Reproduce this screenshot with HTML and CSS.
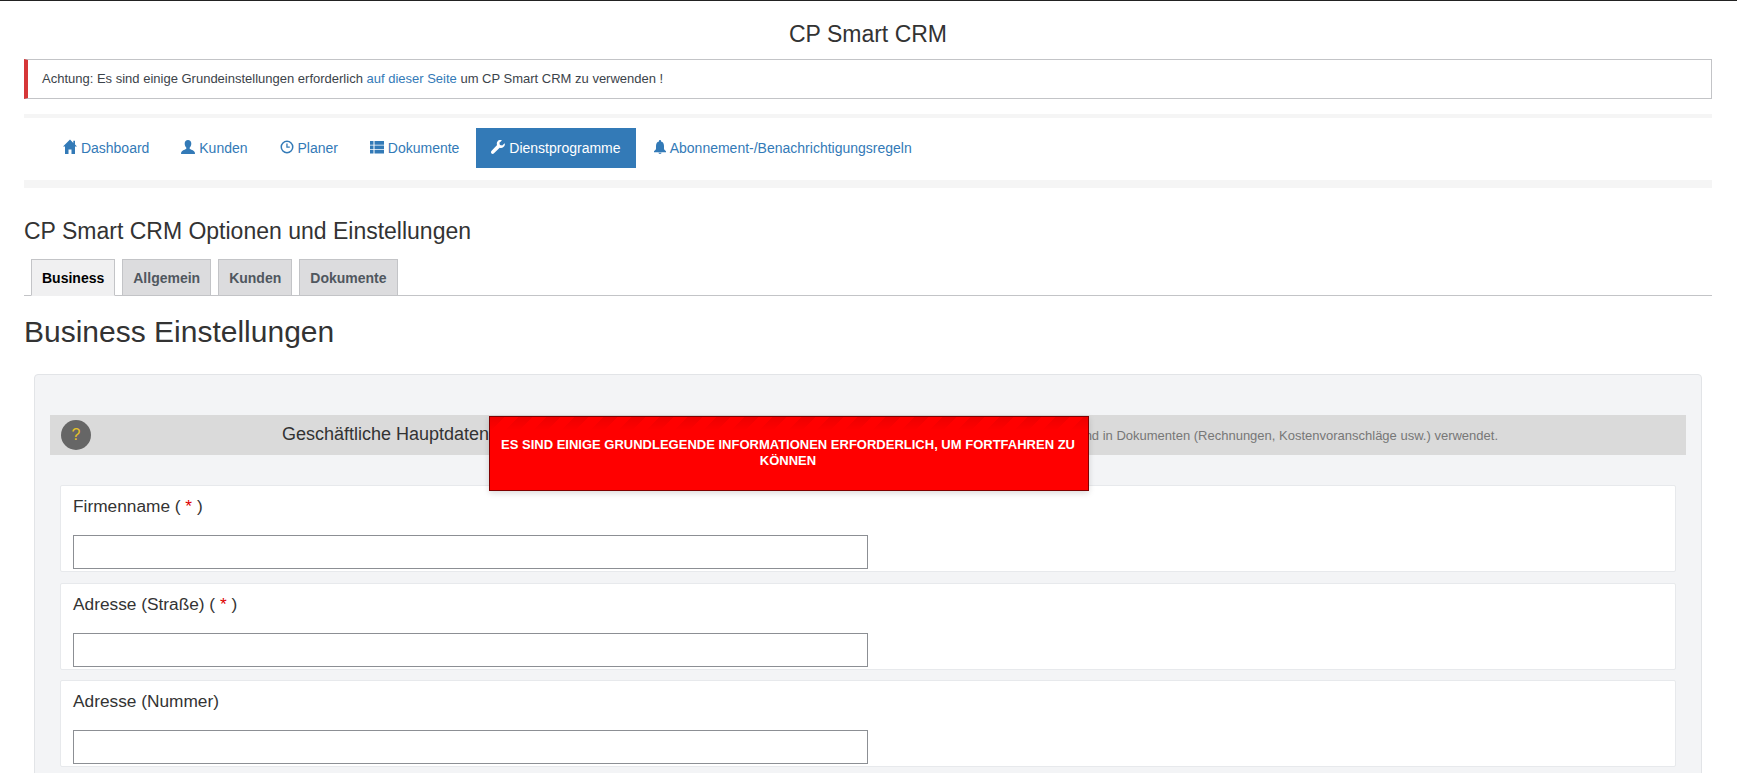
FILE: index.html
```html
<!DOCTYPE html>
<html lang="de">
<head>
<meta charset="utf-8">
<title>CP Smart CRM</title>
<link rel="stylesheet" href="styles.css">
</head>
<body>
<div class="page">
  <h3 class="app-title">CP Smart CRM</h3>
  <div class="notice">Achtung: Es sind einige Grundeinstellungen erforderlich <a href="#">auf dieser Seite</a> um CP Smart CRM zu verwenden !</div>
  <nav class="navbar">
    <ul class="pills">
      <li><a href="#"><svg class="ico" viewBox="0 0 14 14"><path d="M7 -.6 0 6.600h2V14h3.500V9.400h3V14H12V6.600h2l-2-2V.8H10.300v2.100z"/></svg> Dashboard</a></li>
      <li><a href="#"><svg class="ico" viewBox="0 0 14 14"><path d="M7 0C5 0 3.700 1.400 3.700 3.400c0 1.600.6 3.100 1.500 4 .4.500.2 1.200-.3 1.500C3.400 9.800.8 10.400.2 12.300L0 14h14l-.2-1.700c-.6-1.900-3.200-2.500-4.700-3.400-.5-.3-.7-1-.3-1.500.9-.9 1.500-2.400 1.500-4C10.300 1.400 9 0 7 0z"/></svg> Kunden</a></li>
      <li><a href="#"><svg class="ico" viewBox="0 0 14 14"><path fill-rule="evenodd" d="M7 .5a6.500 6.500 0 1 0 0 13 6.500 6.500 0 0 0 0-13zm0 1.500a5 5 0 1 1 0 10 5 5 0 0 1 0-10zM6.300 3.500v4.200h3.500V6.500H7.600v-3z"/></svg> Planer</a></li>
      <li><a href="#"><svg class="ico" viewBox="0 0 14 14"><path d="M0 1h3.500v3.700H0zM4.500 1H14v3.700H4.500zM0 5.400h3.500v3.700H0zM4.500 5.400H14v3.700H4.500zM0 9.800h3.500v3.700H0zM4.500 9.800H14v3.700H4.500z"/></svg> Dokumente</a></li>
      <li class="active"><a href="#"><svg class="ico" viewBox="0 0 14 14"><path d="M13.700 3.200 11.200 5.500 8.900 5 8.400 2.800 10.900.4C9.300-.3 7.400.1 6.500 1.400 5.700 2.500 5.600 3.900 6.100 5L.6 10.800c-.8.800-.8 1.900-.1 2.600.7.700 1.800.6 2.500-.1L8.700 7.700c1.200.5 2.600.3 3.700-.6 1.300-1 1.800-2.600 1.300-3.900z"/></svg> Dienstprogramme</a></li>
      <li><a href="#"><svg class="ico" viewBox="0 0 14 14"><path d="M7 0c-.6 0-1 .4-1 1v.5C3.900 2 3 3.800 3 6v2.600c0 1-.9 1.900-2 2.600v1h12v-1c-1.100-.7-2-1.600-2-2.600V6c0-2.200-.9-4-3-4.500V1c0-.6-.4-1-1-1zM5.400 12.800c.2.700.8 1.200 1.600 1.200s1.400-.5 1.600-1.200z"/></svg> Abonnement-/Benachrichtigungsregeln</a></li>
    </ul>
  </nav>
  <h3 class="page-title">CP Smart CRM Optionen und Einstellungen</h3>
  <div class="tabs">
    <a class="tab tab-active" href="#">Business</a>
    <a class="tab" href="#">Allgemein</a>
    <a class="tab" href="#">Kunden</a>
    <a class="tab" href="#">Dokumente</a>
  </div>
  <h1 class="section-title">Business Einstellungen</h1>
  <section class="panel">
    <div class="panel-head">
      <span class="help">?</span>
      <span class="head-title">Geschäftliche Hauptdaten</span>
      <span class="head-desc">Diese Daten werden im System und in Dokumenten (Rechnungen, Kostenvoranschläge usw.) verwendet.</span>
    </div>
    <div class="field"><label class="field-label">Firmenname ( <span class="req">*</span> )</label><input class="field-input" type="text"></div>
    <div class="field"><label class="field-label">Adresse (Straße) ( <span class="req">*</span> )</label><input class="field-input" type="text"></div>
    <div class="field"><label class="field-label">Adresse (Nummer)</label><input class="field-input" type="text"></div>
  </section>
</div>
<div class="alert">ES SIND EINIGE GRUNDLEGENDE INFORMATIONEN ERFORDERLICH, UM FORTFAHREN ZU KÖNNEN</div>
</body>
</html>
```
FILE: styles.css
```css
* { box-sizing: border-box; }
html, body { margin: 0; height: 773px; overflow: hidden; }
body {
  background: #fff;
  color: #333;
  font-family: "Liberation Sans", Arial, sans-serif;
  font-size: 14px;
  line-height: 20px;
  border-top: 1px solid #222;
}
.page { padding: 0 25px 0 24px; }
.app-title {
  margin: 0;
  padding-top: 20px;
  height: 58px;
  text-align: center;
  font-size: 23px;
  font-weight: 400;
  line-height: 26px;
}
.notice {
  height: 40px;
  padding: 9px 14px 0 14px;
  background: #fff;
  border: 1px solid #c3c4c7;
  border-left: 4px solid #d63638;
  font-size: 13px;
  line-height: 20px;
  color: #3c434a;
}
.notice a { color: #337ab7; text-decoration: none; }
.navbar {
  margin-top: 15px;
  border-top: 4px solid #f5f5f5;
  border-bottom: 8px solid #f5f5f5;
  padding: 10px 24px 12px;
}
.pills { display: flex; gap: 2px; margin: 0; padding: 0; list-style: none; }
.pills a {
  display: block;
  height: 40px;
  padding: 10px 15px;
  color: #337ab7;
  text-decoration: none;
  white-space: nowrap;
}
.pills .active a { background: #337ab7; color: #fff; }
.ico { width: 14px; height: 14px; fill: currentColor; overflow: visible; vertical-align: -1px; }
.page-title {
  margin: 29px 0 0;
  font-size: 23px;
  font-weight: 400;
  line-height: 28px;
  height: 42px;
}
.tabs {
  display: flex;
  gap: 7px;
  height: 37px;
  padding-left: 7px;
  border-bottom: 1px solid #c3c4c7;
}
.tab {
  height: 37px;
  padding: 6px 10px 0;
  border: 1px solid #c3c4c7;
  background: #dcdcde;
  color: #50575e;
  font-size: 14px;
  font-weight: 700;
  line-height: 24px;
  text-decoration: none;
}
.tab-active { background: #f0f0f1; color: #000; border-bottom-color: #f0f0f1; }
.section-title {
  margin: 19px 0 25px;
  font-size: 30px;
  font-weight: 400;
  line-height: 34px;
  color: #333;
}
.panel {
  margin: 0 10px;
  padding: 40px 15px 0;
  background: #f3f4f6;
  border: 1px solid #e2e4e7;
  border-radius: 4px;
  height: 500px;
}
.panel-head {
  display: flex;
  align-items: center;
  height: 40px;
  padding: 0 188px 0 11px;
  margin-bottom: 30px;
  background: #dadada;
}
.help {
  flex: none;
  width: 30px;
  height: 30px;
  border-radius: 50%;
  background: #666;
  color: #e6c229;
  font-size: 16px;
  line-height: 30px;
  text-align: center;
}
.head-title { margin-left: 191px; padding-bottom: 2px; font-size: 18px; color: #333; white-space: nowrap; }
.head-desc { margin-left: auto; font-size: 13px; color: #777; white-space: nowrap; padding-top: 2px; }
.field {
  display: flex;
  flex-direction: column;
  align-items: flex-start;
  height: 87px;
  margin: 0 10px 10.5px;
  padding: 9px 12px 0;
  background: #fff;
  border: 1px solid #e7e9ec;
  border-radius: 2px;
}
.field-label { font-size: 17.3px; line-height: 22px; color: #333; }
.req { color: #d00; }
.field-input {
  width: 795px;
  height: 34px;
  margin-top: 18px;
  background: #fff;
  border: 1px solid #8c8f94;
  border-radius: 0;
}
.alert {
  position: absolute;
  left: 489px;
  top: 416px;
  width: 600px;
  height: 75px;
  padding: 20px 12px 0 10px;
  background: #f00;
  border: 1px solid #7f0000;
  box-shadow: 0 2px 6px rgba(0, 0, 0, .15);
  color: #fff;
  font-size: 13px;
  font-weight: 700;
  line-height: 16px;
  text-align: center;
}
.alert::before {
  content: "";
  position: absolute;
  left: 0;
  right: 0;
  top: 0;
  height: 14px;
  background: repeating-linear-gradient(135deg, rgba(150, 0, 0, .16) 0 10px, transparent 10px 20px);
  -webkit-mask-image: linear-gradient(#000, transparent);
  mask-image: linear-gradient(#000, transparent);
}
```
